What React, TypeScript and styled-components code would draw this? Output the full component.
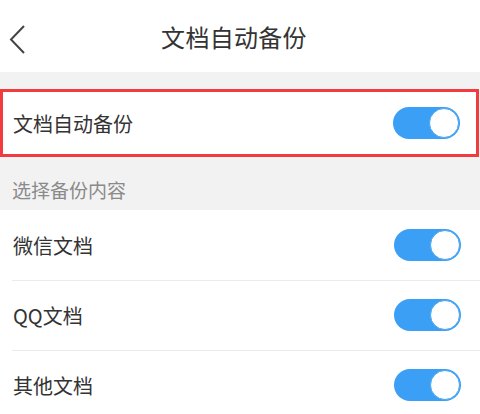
import React, { useState } from "react";
import styled, { createGlobalStyle } from "styled-components";

const GlobalStyle = createGlobalStyle`
  html, body {
    margin: 0;
    padding: 0;
    background: #f2f2f2;
    font-family: "Noto Sans CJK SC", "Noto Sans", sans-serif;
    -webkit-font-smoothing: antialiased;
  }
`;

const Page = styled.div`
  width: 480px;
  height: 414px;
  overflow: hidden;
  background: #f2f2f2;
`;

const NavBar = styled.div`
  height: 72px;
  background: #fff;
  display: flex;
  align-items: center;
  justify-content: center;
  position: relative;
`;

const BackButton = styled.button`
  position: absolute;
  left: 4px;
  top: 22px;
  width: 26px;
  height: 36px;
  padding: 0;
  border: none;
  background: none;
  display: flex;
  align-items: center;
  justify-content: center;
`;

const Title = styled.h1`
  margin: 0 12px 0 0;
  font-size: 24px;
  font-weight: 400;
  color: #333;
  letter-spacing: 0.3px;
`;

const Highlight = styled.div`
  margin: 17px 1px 0 0;
  border: 3px solid #f23b3f;
`;

const Row = styled.div<{ $height: number; $inset: number; $divider?: boolean }>`
  height: ${(p) => p.$height}px;
  background: #fff;
  display: flex;
  align-items: center;
  justify-content: space-between;
  padding: 0 ${(p) => 19 - p.$inset}px 0 ${(p) => 13 - p.$inset}px;
  position: relative;
  box-sizing: border-box;

  &::before {
    content: "";
    display: ${(p) => (p.$divider ? "block" : "none")};
    position: absolute;
    left: 12px;
    right: 0;
    top: 0;
    height: 1px;
    background: #ebebeb;
  }
`;

const Label = styled.span`
  font-size: 20px;
  color: #333;
`;

const SectionHeader = styled.div`
  height: 53px;
  display: flex;
  align-items: flex-end;
  padding: 0 0 7px 12px;
  box-sizing: border-box;
  font-size: 19px;
  color: #8a8a8a;
`;

const Track = styled.button<{ $on: boolean }>`
  width: 67px;
  height: 32px;
  border-radius: 16px;
  border: none;
  padding: 1px;
  background: ${(p) => (p.$on ? "#3a9ff5" : "#e0e0e0")};
  display: flex;
  justify-content: ${(p) => (p.$on ? "flex-end" : "flex-start")};
  align-items: center;
  cursor: pointer;
  box-sizing: border-box;
`;

const Knob = styled.span`
  width: 30px;
  height: 30px;
  border-radius: 50%;
  background: #fff;
  box-sizing: border-box;
  border: 1.5px solid #4aa6f0;
`;

const Toggle = ({ on, onChange }: { on: boolean; onChange: () => void }) => (
  <Track $on={on} onClick={onChange}>
    <Knob />
  </Track>
);

const items = ["微信文档", "QQ文档", "其他文档"];

const App = () => {
  const [auto, setAuto] = useState(true);
  const [flags, setFlags] = useState<boolean[]>([true, true, true]);

  return (
    <Page>
      <GlobalStyle />
      <NavBar>
        <BackButton>
          <svg width="20" height="30" viewBox="0 0 20 30">
            <path d="M17 1 L4 14.5 L17 28" fill="none" stroke="#444" strokeWidth="2" />
          </svg>
        </BackButton>
        <Title>文档自动备份</Title>
      </NavBar>
      <Highlight>
        <Row $height={62} $inset={3}>
          <Label>文档自动备份</Label>
          <Toggle on={auto} onChange={() => setAuto(!auto)} />
        </Row>
      </Highlight>
      <SectionHeader>选择备份内容</SectionHeader>
      {items.map((name, i) => (
        <Row key={name} $height={70} $inset={0} $divider={i > 0}>
          <Label>{name}</Label>
          <Toggle
            on={flags[i]}
            onChange={() => setFlags(flags.map((f, j) => (j === i ? !f : f)))}
          />
        </Row>
      ))}
    </Page>
  );
};

export default App;
